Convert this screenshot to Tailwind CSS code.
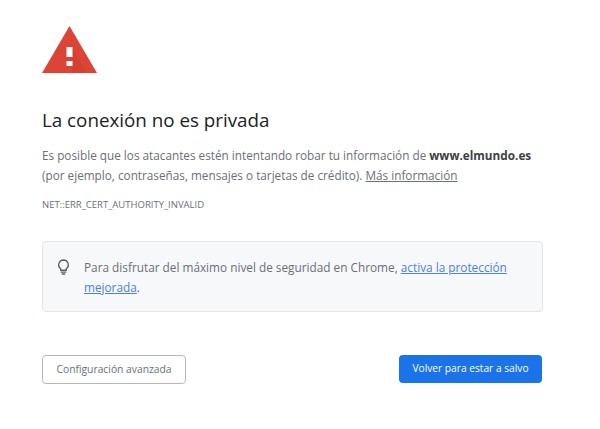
<!doctype html>
<html><head><meta charset="utf-8"><script src="https://cdn.jsdelivr.net/npm/@tailwindcss/browser@4"></script></head>
<body class="bg-white">
<main class="w-[600px] h-[429px] overflow-hidden pl-[42px] pt-[26px] font-['Open_Sans',sans-serif] text-[#6b6f74]">
<svg class="block w-[55px] h-[47px]" viewBox="0 0 55 47"><path d="M27.5 0 L55 47 L0 47 Z" fill="#db4437"/><path d="M30 21 L44 47 L30 47 Z" fill="#c53929" opacity="0.35"/><rect x="24.5" y="21" width="6" height="10" fill="#fff"/><rect x="24.5" y="35" width="6" height="5" fill="#fff"/></svg>
<h1 class="mt-[35px] text-[18.8px] leading-[24px] text-[#202124] font-normal">La conexión no es privada</h1>
<p class="mt-[13px] w-[510px] text-[11.75px] leading-[20px] whitespace-nowrap">Es posible que los atacantes estén intentando robar tu información de <b class="text-[#3c4043] font-bold">www.elmundo.es</b><br>(por ejemplo, contraseñas, mensajes o tarjetas de crédito). <a class="underline">Más información</a></p>
<p class="mt-[14px] text-[9.5px] leading-[12px]">NET::ERR_CERT_AUTHORITY_INVALID</p>
<section class="mt-[30px] w-[501px] h-[71px] rounded-[4px] border border-[#e3e5e8] bg-[#f7f8fa] flex pl-[14px] pt-[15px]">
<svg class="w-[13px] h-[16px] mt-[2px] shrink-0" viewBox="0 0 14 17" fill="none" stroke="#5f6368" stroke-width="1.5"><path d="M7 1a5.2 5.2 0 0 0-3 9.4V12h6v-1.6A5.2 5.2 0 0 0 7 1Z"/><path d="M4 14h6M5.2 16h3.6"/></svg>
<div class="ml-[14px] w-[440px] text-[11.8px] leading-[20px]"><p>Para disfrutar del máximo nivel de seguridad en Chrome, <a class="text-[#4a80e8] underline">activa la protección</a></p><p><a class="text-[#4a80e8] underline">mejorada</a>.</p></div>
</section>
<div class="mt-[43px] w-[500px] flex justify-between items-start">
<button class="w-[144px] h-[29px] rounded-[4px] border border-[#b4b7bb] text-[10.3px] text-[#6b6f74] bg-white">Configuración avanzada</button>
<button class="w-[143px] h-[28px] rounded-[4px] bg-[#1a73e8] text-[10.2px] font-medium text-white">Volver para estar a salvo</button>
</div>
</main>
</body></html>
